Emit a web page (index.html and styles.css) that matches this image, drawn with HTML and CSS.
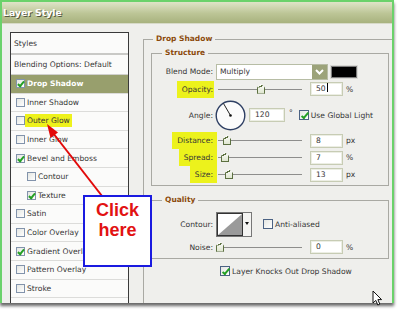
FILE: index.html
```html
<!DOCTYPE html>
<html lang="en">
<head>
    <meta charset="UTF-8">
    <title>Layer Style</title>
    <link rel="stylesheet" href="styles.css">
</head>
<body>
<div class="shot">
    <div class="dialog">
        <div class="titlebar">Layer Style</div>
        <div class="content">
            <ul class="styles">
                <li class="head">Styles</li>
                <li class="head blend">Blending Options: Default</li>
                <li class="item active"><span class="cb on"></span>Drop Shadow</li>
                <li class="item"><span class="cb"></span>Inner Shadow</li>
                <li class="item"><span class="cb"></span><span class="mark">Outer Glow</span></li>
                <li class="item"><span class="cb"></span>Inner Glow</li>
                <li class="item"><span class="cb on"></span>Bevel and Emboss</li>
                <li class="item sub"><span class="cb"></span>Contour</li>
                <li class="item sub"><span class="cb on"></span>Texture</li>
                <li class="item"><span class="cb"></span>Satin</li>
                <li class="item"><span class="cb"></span>Color Overlay</li>
                <li class="item"><span class="cb on"></span>Gradient Overlay</li>
                <li class="item"><span class="cb"></span>Pattern Overlay</li>
                <li class="item"><span class="cb"></span>Stroke</li>
            </ul>

            <div class="options">
                <fieldset class="group outer">
                    <legend>Drop Shadow</legend>

                    <fieldset class="group inner structure">
                        <legend>Structure</legend>
                        <div class="row r-blend">
                            <div class="lbl">Blend Mode:</div>
                            <div class="select">
                                <span>Multiply</span>
                                <span class="drop">
                                    <svg width="15" height="14" viewBox="0 0 15 14"><polyline points="4,5 7.5,8.5 11,5" fill="none" stroke="#fff" stroke-width="2"/></svg>
                                </span>
                            </div>
                            <span class="swatch"></span>
                        </div>
                        <div class="row r-opacity">
                            <div class="lbl"><span class="hl hl-opacity">Opacity:</span></div>
                            <div class="slider"><span class="thumb" style="left: 43px"></span></div>
                            <div class="num">50<span class="caret"></span></div>
                            <span class="unit">%</span>
                        </div>
                        <div class="row r-angle">
                            <div class="lbl">Angle:</div>
                            <svg class="dial" width="31" height="31" viewBox="0 0 31 31">
                                <circle cx="15.5" cy="15.5" r="14.3" fill="#fbfbfb" stroke="#2e3f63" stroke-width="1.4"/>
                                <line x1="15.5" y1="15.5" x2="8.5" y2="3.5" stroke="#222" stroke-width="1"/>
                                <circle cx="15.5" cy="15.5" r="1.3" fill="#111"/>
                            </svg>
                            <div class="num num-angle">120</div>
                            <span class="deg">&deg;</span>
                            <span class="cb lg on global"></span>
                            <span class="cb-text">Use Global Light</span>
                        </div>
                        <div class="row">
                            <div class="lbl"><span class="hl hl-distance">Distance:</span></div>
                            <div class="slider"><span class="thumb" style="left: 9px"></span></div>
                            <div class="num">8</div>
                            <span class="unit">px</span>
                        </div>
                        <div class="row">
                            <div class="lbl"><span class="hl">Spread:</span></div>
                            <div class="slider"><span class="thumb" style="left: 7px"></span></div>
                            <div class="num">7</div>
                            <span class="unit">%</span>
                        </div>
                        <div class="row">
                            <div class="lbl"><span class="hl">Size:</span></div>
                            <div class="slider"><span class="thumb" style="left: 11px"></span></div>
                            <div class="num">13</div>
                            <span class="unit">px</span>
                        </div>
                    </fieldset>

                    <fieldset class="group inner quality">
                        <legend>Quality</legend>
                        <div class="row r-contour">
                            <div class="lbl">Contour:</div>
                            <div class="contour">
                                <svg width="36" height="25" viewBox="0 0 36 25">
                                    <rect x="0.5" y="0.5" width="35" height="24" fill="#f4f4f2" stroke="#777"/>
                                    <rect x="1.5" y="1.5" width="25" height="22" fill="#fff" stroke="#333"/>
                                    <polygon points="2,23 26,2 26,23" fill="#9a9a9a"/>
                                    <polygon points="29,10 33,10 31,13" fill="#111"/>
                                </svg>
                            </div>
                            <span class="cb lg anti"></span>
                            <span class="cb-text">Anti-aliased</span>
                        </div>
                        <div class="row r-noise">
                            <div class="lbl">Noise:</div>
                            <div class="slider"><span class="thumb" style="left: 2px"></span></div>
                            <div class="num">0</div>
                            <span class="unit">%</span>
                        </div>
                    </fieldset>

                    <div class="row r-knock">
                        <span class="cb lg on"></span>
                        <span class="cb-text">Layer Knocks Out Drop Shadow</span>
                    </div>
                </fieldset>
            </div>
        </div>
    </div>

    <!-- annotation drawn over the screenshot -->
    <svg class="arrow" width="400" height="311" viewBox="0 0 400 311">
        <line x1="102" y1="196" x2="53" y2="133" stroke="#e20a0a" stroke-width="2"/>
        <polygon points="47,124 58,132.5 50.5,138" fill="#e20a0a"/>
    </svg>
    <div class="callout">Click<br>here</div>

    <svg class="cursor" width="11" height="17" viewBox="0 0 11 17">
        <path d="M1 1 L1 13 L3.8 10.4 L5.8 15 L7.8 14.1 L5.9 9.6 L9.6 9.6 Z" fill="#fff" stroke="#111" stroke-width="1" stroke-linejoin="round"/>
    </svg>
</div>
</body>
</html>
```

FILE: styles.css
```css
* {
    box-sizing: border-box;
}

body {
    margin: 0;
    background: #fff;
    font-family: "DejaVu Sans", Verdana, sans-serif;
    font-size: 7.6px;
    color: #363636;
}

.shot {
    position: relative;
    width: 400px;
    height: 311px;
    overflow: hidden;
}

.dialog {
    width: 394px;
    height: 303px;
    border: 2px solid #6bd26b;
    border-bottom: 0;
    background: #efefec;
    overflow: hidden;
    box-shadow: 0 3px 3px rgba(0, 0, 0, 0.6);
}

.titlebar {
    height: 22px;
    line-height: 21px;
    padding-left: 1px;
    font-size: 9.3px;
    font-weight: bold;
    color: #fff;
    text-shadow: 1px 1px 0 #55583f;
    background: linear-gradient(to bottom, #dfe4c8, #bcc596 55%, #a8b27e);
    border-bottom: 1px solid #d7dac8;
}

.content {
    display: flex;
    align-items: flex-start;
    padding: 8px 0 0 8px;
}

/* styles list on the left */
.styles {
    list-style: none;
    margin: 0;
    padding: 0;
    width: 119px;
    height: 300px;
    flex: none;
    border: 1px solid #3a3a3a;
    background: #fbfbfa;
}

.styles li {
    display: flex;
    align-items: center;
    height: 18.6px;
    border-bottom: 1px solid #dcdcda;
    padding-left: 5px;
    white-space: nowrap;
}

.styles .head {
    height: 22px;
    padding-left: 3px;
    border-bottom: 2px solid #c9c9c6;
}

.styles .head.blend {
    height: 20px;
    border-bottom: 1px solid #d0d0cd;
}

.styles .item .cb {
    margin-right: 2px;
}

.styles .sub {
    padding-left: 16px;
}

.styles .active {
    background: #989f6d;
    color: #fff;
    font-weight: bold;
    font-size: 7.5px;
}

.mark {
    background: #eef21c;
    padding: 2px 2px;
    margin-left: -2px;
}

/* checkboxes */
.cb {
    position: relative;
    display: inline-block;
    flex: none;
    width: 9px;
    height: 9px;
    border: 1px solid #8293ab;
    background: linear-gradient(135deg, #e4e6e2, #fff);
}

.cb.lg {
    width: 10px;
    height: 10px;
    border-color: #4b6283;
}

.cb.on::after {
    content: "";
    position: absolute;
    left: 2px;
    top: 0;
    width: 2px;
    height: 5px;
    border: solid #24a024;
    border-width: 0 2px 2px 0;
    transform: rotate(40deg);
}

.cb.lg.on::after {
    left: 3px;
    top: 0;
    height: 6px;
}

.cb-text {
    margin-left: 2px;
    white-space: nowrap;
}

/* option groups */
.options {
    flex: 1;
    margin: 1px 0 0 14px;
}

fieldset.group {
    margin: 0;
    padding: 0;
    min-width: 0;
    border: 1px solid #a9a9a3;
}

fieldset.group legend {
    padding: 0 3px;
    line-height: 12px;
    font-weight: bold;
    font-size: 7.5px;
    color: #8b4a0b;
}

.outer {
    border-right: 0 !important;
    padding: 0 0 40px 7px !important;
}

.outer > legend {
    margin-left: 2px;
}

.inner {
    width: 238px;
}

.inner > legend {
    margin-left: 10px;
}

.structure {
    margin-top: 2px !important;
    padding: 4px 0 2px !important;
}

.quality {
    margin-top: 8px !important;
    padding: 5px 0 1px !important;
}

.row {
    display: flex;
    align-items: center;
    height: 17px;
    white-space: nowrap;
}

.r-opacity {
    height: 18px;
}

.r-angle {
    height: 34px;
}

.r-contour {
    height: 26px;
}

.r-noise {
    height: 20px;
}

.r-knock {
    height: 16px;
    margin-top: 4px;
    padding-left: 69px;
}

.lbl {
    width: 61px;
    flex: none;
    text-align: right;
}

.hl {
    background: #ecf21c;
    padding: 4px 4px 4px 5px;
    margin-right: -4px;
}

.hl-opacity {
    padding-right: 1px;
    margin-right: -1px;
}

.select {
    display: flex;
    width: 112px;
    height: 16px;
    margin-left: 3px;
    border: 1px solid #b7bda5;
    background: #fff;
}

.select span:first-child {
    flex: 1;
    padding-left: 3px;
    line-height: 14px;
}

.drop {
    width: 15px;
    background: #9ca37a;
}

.drop svg {
    display: block;
}

.swatch {
    width: 26px;
    height: 12px;
    margin-left: 3px;
    background: #000;
    border: 1px solid #7c7c7c;
    box-shadow: 0 0 0 1px #d8d8d4;
}

.slider {
    position: relative;
    width: 84px;
    height: 11px;
    margin-left: 5px;
    flex: none;
}

.slider::before {
    content: "";
    position: absolute;
    left: 0;
    right: 0;
    top: 5px;
    height: 1px;
    background: #8e8e8c;
}

.thumb {
    position: absolute;
    top: 0;
    width: 8px;
    height: 10px;
    margin-left: -4px;
    background: linear-gradient(#fff, #dfe6cf);
    border: 1px solid #5c7040;
    border-top: 0;
    clip-path: polygon(50% 0, 100% 40%, 100% 100%, 0 100%, 0 40%);
}

.thumb::before {
    content: "";
    position: absolute;
    left: -1px;
    top: 0;
    width: 8px;
    height: 4px;
    background: linear-gradient(to bottom right, transparent 45%, #5c7040 46%, #5c7040 60%, transparent 61%);
    clip-path: polygon(0 100%, 50% 0, 100% 100%);
}

.num {
    width: 33px;
    height: 14px;
    margin-left: 8px;
    padding-left: 5px;
    line-height: 12px;
    border: 1px solid #c7ccb4;
    box-shadow: inset 0 0 0 1px #eceee4;
    background: #fff;
    flex: none;
}

.caret {
    display: inline-block;
    width: 1px;
    height: 9px;
    margin-left: 1px;
    vertical-align: -1px;
    background: #000;
}

.unit {
    margin-left: 3px;
}

.dial {
    margin-left: 2px;
    flex: none;
}

.num-angle {
    width: 36px;
    margin-left: 3px;
}

.deg {
    margin-left: 4px;
    align-self: flex-start;
    margin-top: 10px;
}

.global {
    margin-left: 6px;
}

.contour {
    margin-left: 3px;
    height: 25px;
}

.contour svg {
    display: block;
}

.anti {
    margin-left: 11px;
}

/* annotation */
.arrow {
    position: absolute;
    left: 0;
    top: 0;
}

.callout {
    position: absolute;
    left: 83px;
    top: 195px;
    width: 69px;
    height: 72px;
    padding-top: 3px;
    border: 2px solid #1a1ae0;
    background: #fff;
    text-align: center;
    font-family: "Liberation Sans", Arial, sans-serif;
    font-weight: bold;
    font-size: 18px;
    line-height: 20px;
    color: #e21212;
}

.cursor {
    position: absolute;
    left: 372px;
    top: 290px;
}
```
